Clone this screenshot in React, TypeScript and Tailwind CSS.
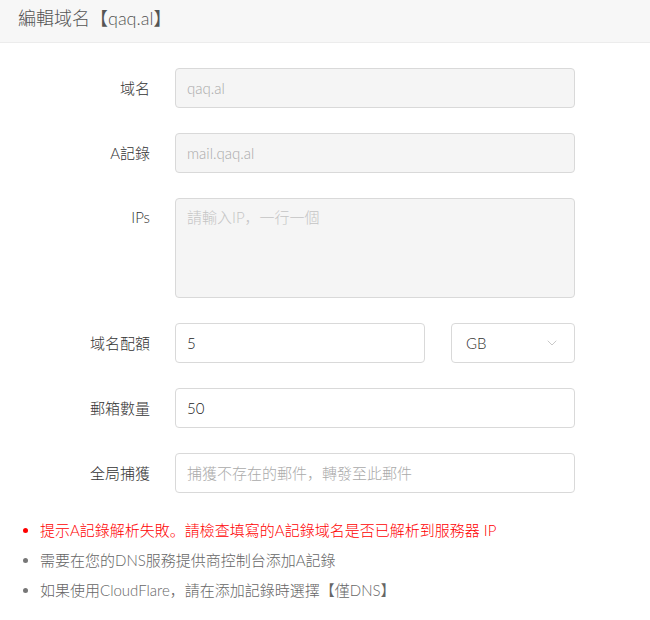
import { ChevronDown } from "lucide-react";

const font = { fontFamily: '"Lato", "Noto Sans CJK SC", sans-serif' };

function Row({ label, children, top }: { label: string; children: React.ReactNode; top?: boolean }) {
  return (
    <div className={`flex ${top ? "items-start" : "items-center"} mb-[25px]`}>
      <label className={`w-[150px] shrink-0 text-right text-[15px] text-[#333] ${top ? "pt-[8px]" : ""}`}>{label}</label>
      <div className="ml-[25px] flex-1 flex gap-[26px]">{children}</div>
    </div>
  );
}

export default function App() {
  return (
    <div className="w-[650px] h-[620px] bg-white font-light" style={font}>
      <div className="h-[43px] bg-[#f7f7f7] border-b border-[#ececec] px-[18px] flex items-center">
        <h2 className="text-[18px] text-[#555] leading-none -mt-[6px]">編輯域名【qaq.al】</h2>
      </div>

      <form className="pt-[25px] pr-[75px]">
        <Row label="域名">
          <input
            disabled
            defaultValue="qaq.al"
            className="w-[400px] h-10 px-[11px] text-[15px] rounded border border-[#d9d9d9] bg-[#f5f5f5] text-[#aaa]"
          />
        </Row>
        <Row label="A記錄">
          <input
            disabled
            defaultValue="mail.qaq.al"
            className="w-[400px] h-10 px-[11px] text-[15px] rounded border border-[#d9d9d9] bg-[#f5f5f5] text-[#aaa]"
          />
        </Row>
        <Row label="IPs" top>
          <textarea
            disabled
            placeholder="請輸入IP，一行一個"
            className="w-[400px] h-[100px] px-[11px] py-[7px] text-[15px] rounded border border-[#d9d9d9] bg-[#f5f5f5] resize-none placeholder:text-[#c4c4c4]"
          />
        </Row>
        <Row label="域名配額">
          <input
            defaultValue="5"
            className="w-[250px] h-10 px-[11px] text-[15px] rounded border border-[#d9d9d9] bg-white text-[#222] outline-none"
          />
          <div className="w-[124px] h-10 px-[14px] rounded border border-[#d9d9d9] flex items-center justify-between text-[15px] text-[#333]">
            <span>GB</span>
            <ChevronDown size={16} strokeWidth={1.2} className="text-[#bbb]" />
          </div>
        </Row>
        <Row label="郵箱數量">
          <input
            defaultValue="50"
            className="w-[400px] h-10 px-[11px] text-[15px] rounded border border-[#d9d9d9] bg-white text-[#222] outline-none"
          />
        </Row>
        <Row label="全局捕獲">
          <input
            placeholder="捕獲不存在的郵件，轉發至此郵件"
            className="w-[400px] h-10 px-[11px] text-[15px] rounded border border-[#d9d9d9] bg-white text-[#333] outline-none placeholder:text-[#aaa]"
          />
        </Row>
      </form>

      <ul className="pl-[40px] pt-[2px] text-[15px] list-disc space-y-[9px] leading-[21px]">
        <li className="text-[#f00] marker:text-[#f00]">提示A記錄解析失敗。請檢查填寫的A記錄域名是否已解析到服務器 IP</li>
        <li className="text-[#666] marker:text-[#777]">需要在您的DNS服務提供商控制台添加A記錄</li>
        <li className="text-[#666] marker:text-[#777]">如果使用CloudFlare，請在添加記錄時選擇【僅DNS】</li>
      </ul>
    </div>
  );
}
